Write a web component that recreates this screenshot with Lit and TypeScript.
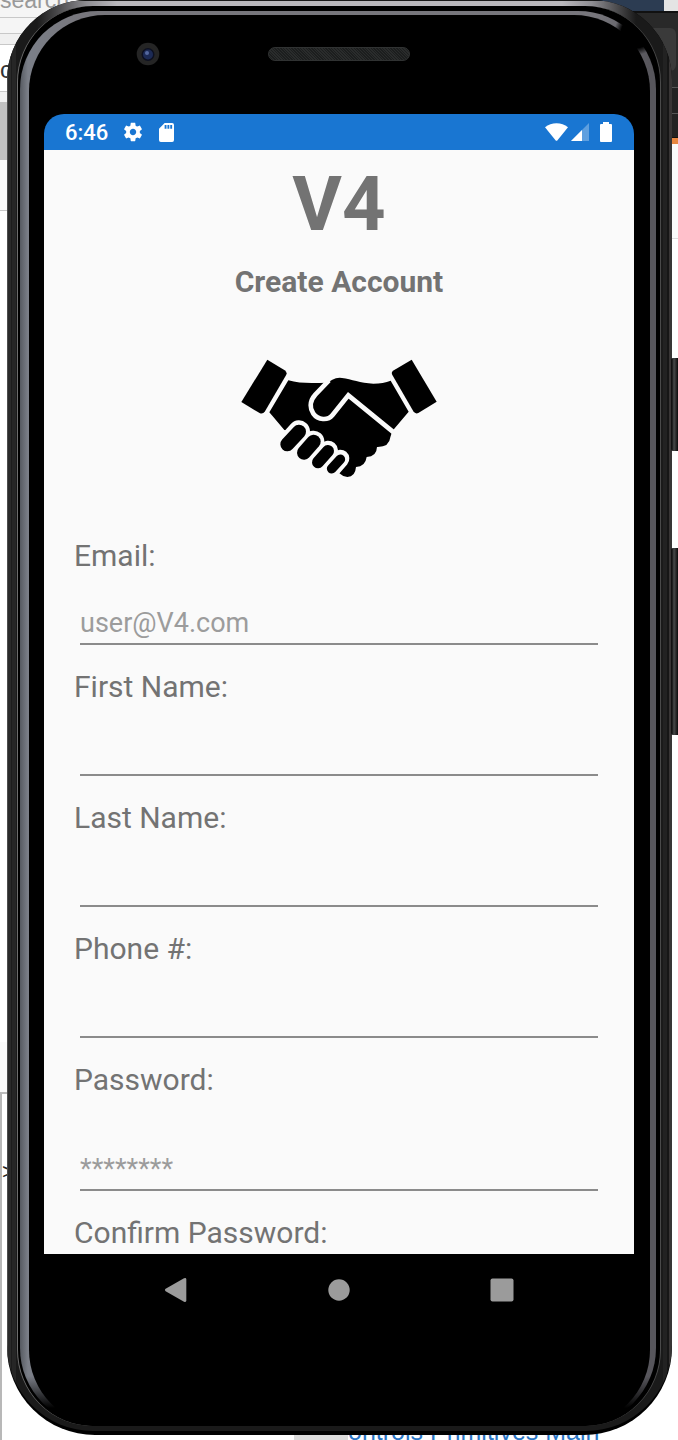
import { LitElement, html, css, nothing } from "lit";
import { customElement, property } from "lit/decorators.js";

interface Field {
  id: string;
  label: string;
  type: string;
  placeholder?: string;
  tall?: boolean;
}

const FIELDS: Field[] = [
  { id: "email", label: "Email:", type: "email", placeholder: "user@V4.com" },
  { id: "first-name", label: "First Name:", type: "text" },
  { id: "last-name", label: "Last Name:", type: "text" },
  { id: "phone", label: "Phone #:", type: "tel" },
  { id: "password", label: "Password:", type: "password", placeholder: "********", tall: true },
  { id: "confirm", label: "Confirm Password:", type: "password", tall: true },
];

@customElement("form-field")
class FormField extends LitElement {
  @property({ attribute: false }) field!: Field;

  static styles = css`
    :host {
      display: block;
    }
    .label {
      display: block;
      font-size: 30px;
      line-height: 38px;
      color: #737373;
    }
    .wrap {
      padding: 22px 6px 23px;
    }
    .wrap.tall {
      padding-top: 44px;
    }
    .input {
      display: block;
      box-sizing: border-box;
      width: 100%;
      height: 48px;
      margin: 0;
      padding: 10px 0 4px;
      border: 0;
      border-bottom: 2px solid #8b8b8b;
      border-radius: 0;
      outline: 0;
      background: transparent;
      font: inherit;
      font-size: 27px;
      color: #212121;
    }
    .input::placeholder {
      color: #9c9c9c;
      opacity: 1;
    }
    .input:focus {
      border-color: #1976d2;
    }
  `;

  render() {
    const f = this.field;
    return html`
      <label class="label" for=${f.id}>${f.label}</label>
      <div class="wrap ${f.tall ? "tall" : ""}">
        <input class="input" id=${f.id} type=${f.type} placeholder=${f.placeholder ?? nothing} />
      </div>
    `;
  }
}

@customElement("status-bar")
class StatusBar extends LitElement {
  static styles = css`
    :host {
      display: flex;
      align-items: center;
      height: 36px;
      box-sizing: border-box;
      padding: 0 22px 0 21px;
      border-radius: 20px 20px 0 0;
      background: #1976d2;
      color: #fff;
      font-size: 22px;
      font-weight: 500;
    }
    .time {
      margin-right: 14px;
    }
    .icon {
      display: block;
      fill: currentColor;
    }
    .gear {
      margin-right: 15px;
    }
    .wifi {
      margin-left: auto;
      margin-right: 3px;
    }
    .signal {
      margin-right: 11px;
    }
  `;

  render() {
    return html`
      <span class="time">6:46</span>
      <svg class="icon gear" width="22" height="22" viewBox="0 0 24 24" aria-hidden="true">
        <path d="M19.43 12.98c.04-.32.07-.64.07-.98s-.03-.66-.07-.98l2.11-1.65c.19-.15.24-.42.12-.64l-2-3.46c-.12-.22-.39-.3-.61-.22l-2.49 1c-.52-.4-1.08-.73-1.69-.98l-.38-2.65C14.46 2.18 14.25 2 14 2h-4c-.25 0-.46.18-.49.42l-.38 2.65c-.61.25-1.17.59-1.69.98l-2.49-1c-.23-.09-.49 0-.61.22l-2 3.46c-.13.22-.07.49.12.64l2.11 1.65c-.04.32-.07.65-.07.98s.03.66.07.98l-2.11 1.65c-.19.15-.24.42-.12.64l2 3.46c.12.22.39.3.61.22l2.49-1c.52.4 1.08.73 1.69.98l.38 2.65c.03.24.24.42.49.42h4c.25 0 .46-.18.49-.42l.38-2.65c.61-.25 1.17-.59 1.69-.98l2.49 1c.23.09.49 0 .61-.22l2-3.46c.12-.22.07-.49-.12-.64l-2.11-1.65zM12 15.5c-1.93 0-3.5-1.57-3.5-3.5s1.57-3.5 3.5-3.5 3.5 1.57 3.5 3.5-1.57 3.5-3.5 3.5z"/>
      </svg>
      <svg class="icon" width="15" height="19" viewBox="4 2 16 20" preserveAspectRatio="none" aria-hidden="true">
        <path d="M18 2h-8L4 8v12q0 2 2 2h12q2 0 2-2V4q0-2-2-2zm-6 6h-2V4h2v4zm3 0h-2V4h2v4zm3 0h-2V4h2v4z"/>
      </svg>
      <svg class="icon wifi" width="23" height="18" viewBox="0 0 23 18" aria-hidden="true">
        <path d="M0 4.200Q5 .2 11.500.2T23 4.200L12.300 17.400Q11.500 18.200 10.700 17.400Z"/>
      </svg>
      <svg class="icon signal" width="18" height="18" viewBox="0 0 18 18" aria-hidden="true">
        <path opacity=".3" d="M18 0V18H0Z"/>
        <path d="M11 7V18H0Z"/>
      </svg>
      <svg class="icon" width="12" height="20" viewBox="0 0 12 20" aria-hidden="true">
        <path d="M3 0h6v2h2q1 0 1 1v16q0 1-1 1H1q-1 0-1-1V3q0-1 1-1h2z"/>
      </svg>
    `;
  }
}

@customElement("nav-keys")
class NavKeys extends LitElement {
  static styles = css`
    :host {
      display: grid;
      grid-template-columns: repeat(3, 1fr);
      height: 72px;
      padding: 0 50px;
    }
    .key {
      display: grid;
      place-items: center;
      margin: 0;
      padding: 0;
      border: 0;
      background: none;
    }
    .glyph {
      display: block;
      fill: #9b9b9b;
    }
  `;

  render() {
    return html`
      <button class="key" type="button" aria-label="Back">
        <svg class="glyph" width="24" height="24" viewBox="0 0 24 24">
          <path d="M20 .3Q22.300-.6 22.300 1.500V22.500Q22.300 24.600 20 23.700L1.600 13.200Q.3 12 1.600 10.800Z"/>
        </svg>
      </button>
      <button class="key" type="button" aria-label="Home">
        <svg class="glyph" width="24" height="24" viewBox="0 0 24 24"><circle cx="12" cy="12" r="10.700"/></svg>
      </button>
      <button class="key" type="button" aria-label="Overview">
        <svg class="glyph" width="24" height="24" viewBox="0 0 24 24"><rect x=".5" y=".5" width="23" height="23" rx="2"/></svg>
      </button>
    `;
  }
}

@customElement("app-root")
class AppRoot extends LitElement {
  static styles = css`
    :host {
      display: block;
      position: relative;
      height: 100vh;
      overflow: hidden;
      background: #fff;
      font-family: Roboto, "Liberation Sans", sans-serif;
    }

    /* Windows on the desktop behind the emulator */
    .desktop {
      position: absolute;
      inset: 0;
      display: flex;
      justify-content: space-between;
      font-family: "Liberation Sans", Arial, sans-serif;
      overflow: hidden;
    }
    .col-left {
      width: 100px;
    }
    .col-right {
      width: 90px;
    }
    .strip {
      box-sizing: border-box;
      border-bottom: 1px solid #c8c8c8;
      background: #f5f5f5;
      overflow: hidden;
    }
    .search {
      height: 18px;
      font-size: 23px;
      line-height: 0;
      color: #999;
    }
    .s16 { height: 16px; }
    .s11 { height: 11px; background: #f0f0f0; }
    .query {
      height: 47px;
      background: #fff;
      font-size: 24px;
      line-height: 50px;
      color: #333;
    }
    .tab { height: 10px; border: 0; background: #f0f0f0; }
    .grey { height: 58px; border: 0; background: #c0c0c0; }
    .pale { height: 51px; background: #fafafa; }
    .blank { height: 831px; border: 0; background: #fff; }
    .faint { height: 50px; border: 0; background: #fafafa; }
    .panel {
      height: 400px;
      border: 0;
      border-top: 2px solid #bbb;
      border-left: 2px solid #b8b8b8;
      background: #fff;
      font-size: 22px;
      line-height: 156px;
      color: #222;
    }
    .photo {
      height: 11px;
      border: 0;
      background: linear-gradient(90deg, #2c3c52 76px, #e4e4e4 76px);
    }
    .bar {
      height: 77px;
      padding: 15px 2px 16px 0;
      background: #292929;
      border-top: 2px solid #111;
      border-bottom-color: #555;
    }
    .chip {
      height: 43px;
      border-radius: 6px;
      background: #3a3a3a;
    }
    .row { height: 26px; background: #222; border-bottom-color: #555; }
    .row2 { height: 24px; background: #222; border-bottom-color: #111; }
    .orange { height: 6px; border: 0; background: #e88740; }
    .card { height: 95px; background: #fafafa; border-bottom-color: #ddd; }
    .caption {
      position: absolute;
      left: 294px;
      bottom: 0;
      height: 6px;
      display: flex;
      align-items: flex-end;
      color: #2a76c6;
      font-size: 25px;
      line-height: 18px;
      white-space: nowrap;
    }
    .swatch {
      width: 54px;
      height: 6px;
      background: #dcdcdc;
    }

    /* Device body, from the outer edge inwards */
    .phone {
      position: relative;
      display: flex;
      box-sizing: border-box;
      height: 100%;
      padding: 0 6px 5px 7px;
    }
    .shell,
    .band,
    .groove,
    .shine,
    .face {
      display: flex;
      flex: 1;
      min-width: 0;
      min-height: 0;
      box-sizing: border-box;
    }
    .shell {
      padding-bottom: 4px;
      border-radius: 80px 80px 88px 88px;
      background: #000;
    }
    .band {
      padding: 6px 11px 5px 10px;
      border-radius: 80px 80px 86px 86px;
      background:
        linear-gradient(90deg, transparent 30px, #8f8e93 80px, #b9b7bc 110px, #b9b7bc calc(100% - 110px), #8f8e93 calc(100% - 80px), transparent calc(100% - 36px)) 0 1px / 100% 30px no-repeat,
        linear-gradient(90deg, #4c4c4c 0 1px, #2a2a2a 1px 4px, #1c1c1c 4px 5px, #262626 5px 9px, #1a1a1a 9px calc(100% - 9px), #222 calc(100% - 9px) calc(100% - 5px), #161616 calc(100% - 5px) calc(100% - 3px), #383535 calc(100% - 3px));
    }
    .groove {
      padding: 5px 4px 0 2px;
      border-left: 1px solid #6d6d6d;
      border-right: 1px solid #4a4a4a;
      border-radius: 76px;
      background: #000;
    }
    .shine {
      padding: 4px 6px 0 9px;
      border-radius: 78px;
      background:
        linear-gradient(0deg, #000 18px, transparent 50px),
        radial-gradient(circle at calc(100% - 20px) 22px, #000 15px, transparent 22px),
        linear-gradient(90deg, #565a61, #7b7f88 8px, #77767c 60px, #77767c calc(100% - 60px), #57565c calc(100% - 6px));
    }
    .face {
      flex-direction: column;
      padding: 0 16px 0 15px;
      border-radius: 76px;
      background: #000;
    }
    .top {
      display: grid;
      grid-template-columns: 1fr 142px 1fr;
      align-items: center;
      height: 99px;
      padding-bottom: 22px;
      box-sizing: border-box;
    }
    .camera {
      display: block;
      margin-left: 92px;
    }
    .speaker {
      height: 14px;
      box-sizing: border-box;
      border: 1px solid #303232;
      border-radius: 7px;
      background: repeating-linear-gradient(45deg, #1c1e1e 0 1px, #2a2c2c 1px 2px);
    }
    .page {
      flex: 1;
      min-height: 0;
      overflow: hidden;
      padding: 10px 30px 0;
      background: #fafafa;
    }
    .title {
      margin: 0 0 14px;
      font-size: 76px;
      line-height: 88px;
      font-weight: 700;
      text-align: center;
      color: #737373;
    }
    .subtitle {
      margin: 0;
      font-size: 30px;
      line-height: 40px;
      font-weight: 700;
      text-align: center;
      color: #737373;
    }
    .logo {
      display: block;
      margin: 38px auto 37px;
    }
    .cut {
      stroke: #fafafa;
      fill: none;
    }
    .finger {
      stroke: #000;
      fill: none;
      stroke-linecap: round;
    }
    .halo {
      stroke: #fafafa;
      stroke-linecap: round;
    }
    .chin {
      height: 100px;
    }

    /* Power and volume rockers on the right edge */
    .rocker {
      position: absolute;
      right: 0;
      width: 7px;
      border-radius: 2px 0 0 2px;
      background: linear-gradient(90deg, #111 1px, #484a4a 3px, #2a2a2a 5px, #0c0c0c);
    }
    .power {
      top: 358px;
      height: 93px;
    }
    .volume {
      top: 548px;
      height: 187px;
    }
  `;

  private desktop() {
    return html`
      <div class="desktop" aria-hidden="true">
        <div class="col-left">
          <div class="strip search">search</div>
          <div class="strip s16"></div>
          <div class="strip s11"></div>
          <div class="strip query">c</div>
          <div class="strip tab"></div>
          <div class="strip grey"></div>
          <div class="strip pale"></div>
          <div class="strip blank"></div>
          <div class="strip faint"></div>
          <div class="strip panel">&gt;</div>
        </div>
        <div class="col-right">
          <div class="strip photo"></div>
          <div class="strip bar"><div class="chip"></div></div>
          <div class="strip row"></div>
          <div class="strip row2"></div>
          <div class="strip orange"></div>
          <div class="strip card"></div>
        </div>
        <div class="caption"><span class="swatch"></span>ontrols Primitives Main</div>
      </div>
    `;
  }

  private handshake() {
    return html`
      <svg class="logo" width="240" height="160" viewBox="-3 0 720 480" role="img" aria-label="Handshake">
        <path d="M142 59L194 91Q203 97 198 106L135 214Q129 223 120 220L64 186Z"/>
        <path d="M575 59L519 92Q513 97 517 105L580 214Q586 223 595 219L650 185Z"/>
        <path d="M205 121C240 132 285 129 322 128L337 119Q350 112 366 114C395 117 420 130 460 131Q490 131 512 122L566 215L519 271Q512 285 511 292Q508 322 471 321Q470 350 440 351Q436 380 408 381Q406 410 382 411Q368 410 358 400L330 340L250 280L193 270L148 217Z"/>
        <path class="cut" stroke-width="14" d="M327 121L286 164C266 186 271 208 280 221C294 241 324 242 337 226L385 166L521 277"/>
        <path class="halo" stroke-width="66" d="M237 274L202 313"/>
        <path class="halo" stroke-width="64" d="M281 304L252 338"/>
        <path class="halo" stroke-width="60" d="M324 332L294 367"/>
        <path class="halo" stroke-width="54" d="M361 356L335 386"/>
        <path class="finger" stroke-width="42" d="M237 275L202 313"/>
        <path class="finger" stroke-width="42" d="M281 305L252 338"/>
        <path class="finger" stroke-width="36" d="M324 333L294 367"/>
        <path class="finger" stroke-width="29" d="M361 358L335 386"/>
      </svg>
    `;
  }

  render() {
    return html`
      ${this.desktop()}
      <div class="phone">
        <div class="rocker power"></div>
        <div class="rocker volume"></div>
        <div class="shell"><div class="band"><div class="groove"><div class="shine"><div class="face">
          <div class="top">
            <svg class="camera" width="24" height="24" viewBox="0 0 24 24" aria-hidden="true">
              <circle cx="12" cy="12" r="11.300" fill="#252525"/>
              <circle cx="12" cy="12.500" r="6.500" fill="#0d1020"/>
              <circle cx="12" cy="12.500" r="5" fill="#1c2a55"/>
              <circle cx="11" cy="11" r="2" fill="#5468a0"/>
            </svg>
            <div class="speaker"></div>
          </div>
          <status-bar></status-bar>
          <main class="page">
            <h1 class="title">V4</h1>
            <h2 class="subtitle">Create Account</h2>
            ${this.handshake()}
            <form>
              ${FIELDS.map((f) => html`<form-field .field=${f}></form-field>`)}
            </form>
          </main>
          <nav-keys></nav-keys>
          <div class="chin"></div>
        </div></div></div></div></div>
      </div>
    `;
  }
}
